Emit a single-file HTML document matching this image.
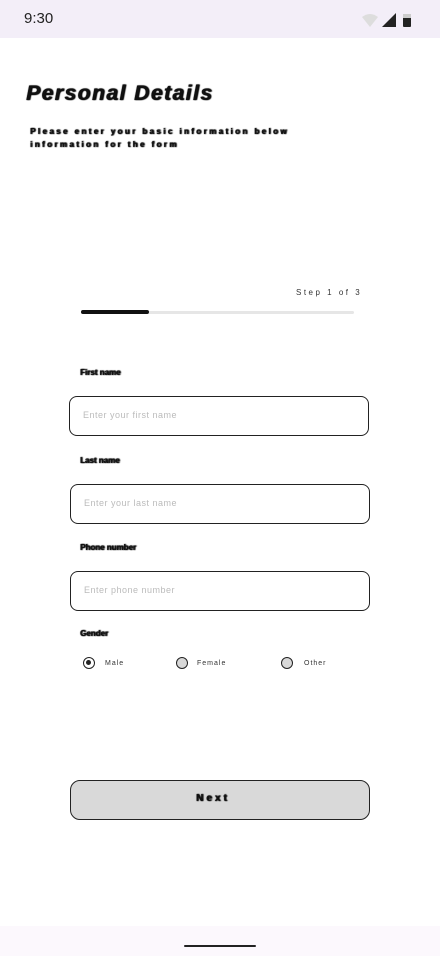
<!DOCTYPE html>
<html><head><meta charset="utf-8"><style>
*{margin:0;padding:0;box-sizing:border-box}
body{width:440px;height:956px;position:relative;background:#fff;font-family:"Liberation Sans",sans-serif;overflow:hidden}
.abs{position:absolute}
.blob{color:#111;font-weight:bold;text-shadow:0 0 1px #000,1px 0 1px #000;white-space:nowrap}
.in{position:absolute;border:1px solid #222;border-radius:8px;height:40px;width:300px}
.ph{position:absolute;left:13px;top:13px;font-size:9px;color:#bbb;letter-spacing:0.5px}
.radio{position:absolute;width:12px;height:12px;border:1.5px solid #222;border-radius:50%;background:#d8d8d8}
.rl{position:absolute;font-size:7px;color:#333}
</style></head><body>
<div class="abs" style="left:0;top:0;width:440px;height:38px;background:#f3eef8"></div>
<div class="abs" style="left:24px;top:10px;font-size:15px;color:#222">9:30</div>
<svg class="abs" style="left:360px;top:12px" width="56" height="16" viewBox="0 0 56 16">
<path d="M2 5 Q10 -1 18 5 L10 15 Z" fill="#ddd"/>
<path d="M22 15 L36 15 L36 1 Z" fill="#222"/>
<rect x="43" y="2" width="8" height="13" rx="1" fill="#222"/>
<rect x="43" y="2" width="8" height="4" fill="#ccc"/>
</svg>
<div class="abs blob" style="left:26px;top:82px;font-size:21px;letter-spacing:1.5px;font-style:italic">Personal Details</div>
<div class="abs blob" style="left:30px;top:125px;font-size:8px;line-height:13px;letter-spacing:2.4px">Please enter your basic information below<br>information for the form</div>
<div class="abs" style="left:296px;top:288px;font-size:8px;color:#333;letter-spacing:2.5px">Step 1 of 3</div>
<div class="abs" style="left:81px;top:311px;width:273px;height:3px;background:#e6e6e6;border-radius:2px"></div>
<div class="abs" style="left:81px;top:310px;width:68px;height:4px;background:#111;border-radius:2px"></div>
<div class="abs blob" style="left:80px;top:368px;font-size:8px">First name</div>
<div class="in" style="left:69px;top:396px"><span class="ph">Enter your first name</span></div>
<div class="abs blob" style="left:80px;top:456px;font-size:8px">Last name</div>
<div class="in" style="left:70px;top:484px"><span class="ph">Enter your last name</span></div>
<div class="abs blob" style="left:80px;top:543px;font-size:8px">Phone number</div>
<div class="in" style="left:70px;top:571px"><span class="ph">Enter phone number</span></div>
<div class="abs blob" style="left:80px;top:629px;font-size:8px">Gender</div>
<div class="radio" style="left:83px;top:657px;background:#fff"><div style="position:absolute;left:2px;top:2px;width:5px;height:5px;border-radius:50%;background:#222"></div></div>
<div class="rl" style="left:105px;top:660px;letter-spacing:1px">Male</div>
<div class="radio" style="left:176px;top:657px"></div>
<div class="rl" style="left:197px;top:660px;letter-spacing:1px">Female</div>
<div class="radio" style="left:281px;top:657px"></div>
<div class="rl" style="left:304px;top:660px;letter-spacing:1px">Other</div>
<div class="abs" style="left:70px;top:780px;width:300px;height:40px;background:#d9d9d9;border:1px solid #222;border-radius:10px"></div>
<div class="abs blob" style="left:196px;top:793px;font-size:10px;letter-spacing:3px">Next</div>
<div class="abs" style="left:0;top:926px;width:440px;height:30px;background:#fcf8fd"></div>
<div class="abs" style="left:184px;top:945px;width:72px;height:2px;background:#222;border-radius:1px"></div>
</body></html>
